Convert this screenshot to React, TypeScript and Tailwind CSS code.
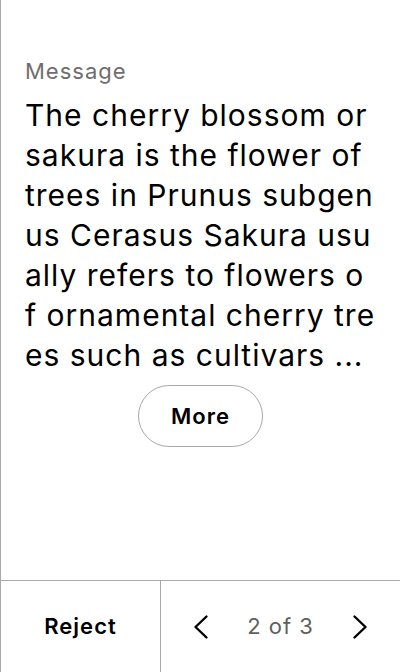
const Chevron = ({ dir }: { dir: 'left' | 'right' }) => (
  <svg width="16" height="28" viewBox="0 0 16 28" fill="none">
    <path
      d={dir === 'left' ? 'M13.5 3.5 L2.5 14 L13.5 24.5' : 'M2.5 3.5 L13.5 14 L2.5 24.5'}
      stroke="#000"
      strokeWidth="2.4"
      strokeLinecap="round"
      strokeLinejoin="round"
    />
  </svg>
);

const lines = [
  'The cherry blossom or',
  'sakura is the flower of',
  'trees in Prunus subgen',
  'us Cerasus Sakura usu',
  'ally refers to flowers o',
  'f ornamental cherry tre',
  'es such as cultivars ...',
];

const App = () => {
  return (
    <div
      className="w-[400px] h-[672px] bg-white border-l border-[#a8a8a8] flex flex-col"
      style={{ fontFamily: 'Inter, "Noto Sans", sans-serif' }}
    >
      {/* Content */}
      <div className="flex-1 px-6 pt-[57px]">
        <p className="text-[22px] leading-7 tracking-[1px] text-[#6e6e6e]">Message</p>
        <p className="mt-[10px] text-[30px] leading-[40px] tracking-[1px] text-black whitespace-nowrap">
          {lines.map((l) => (
            <span key={l} className="block">
              {l}
            </span>
          ))}
        </p>
        <div className="flex justify-center mt-[10px]">
          <button className="w-[125px] h-[62px] rounded-full border border-[#a8a8a8] text-[22px] tracking-[1px] font-semibold text-black">
            More
          </button>
        </div>
      </div>

      {/* Bottom bar */}
      <div className="h-[92px] border-t border-[#a8a8a8] flex">
        <button className="w-[160px] border-r border-[#a8a8a8] text-[22px] tracking-[1px] font-semibold text-black">
          Reject
        </button>
        <div className="flex-1 flex items-center justify-between px-[32px]">
          <Chevron dir="left" />
          <span className="text-[22px] tracking-[1px] text-[#5f5f5f]">2 of 3</span>
          <Chevron dir="right" />
        </div>
      </div>
    </div>
  );
};

export default App;
